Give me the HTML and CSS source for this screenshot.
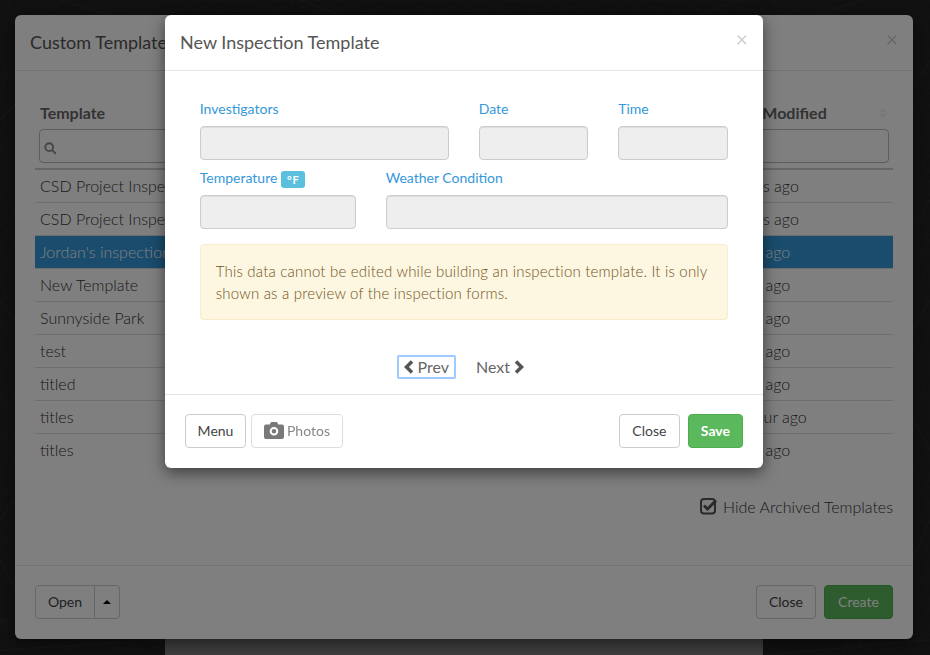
FILE: index.html
```html
<!DOCTYPE html>
<html lang="en">
<head>
  <meta charset="UTF-8">
  <title>New Inspection Template</title>
  <link rel="stylesheet" href="styles.css">
</head>
<body>
  <svg class="map" viewBox="0 0 930 655" aria-hidden="true">
    <filter id="grain">
      <feTurbulence type="fractalNoise" baseFrequency="0.35" numOctaves="2" seed="4"/>
      <feColorMatrix values="0 0 0 0 1  0 0 0 0 1  0 0 0 0 1  0.5 0 0 0 -0.12"/>
    </filter>
    <rect class="map-grain" width="930" height="655" filter="url(#grain)"/>
    <g class="map-roads">
      <path d="M0 120 L15 105 M0 300 L15 320 M0 520 L15 500 M0 560 L15 590"/>
      <path d="M913 90 L930 60 M913 230 L930 200 M913 330 L930 300 M913 560 L930 520 M913 420 L930 450"/>
      <path d="M765 655 L930 640 M0 650 L165 640 M60 0 L110 15 M300 0 L340 15 M700 15 L740 0 M820 15 L860 0"/>
    </g>
    <text class="map-label" x="843" y="645" transform="rotate(12 843 645)">S FRO</text>
    <text class="map-label" x="0" y="625">ht</text>
  </svg>
  <div class="sheet-under"></div>
  <div class="backdrop"></div>

  <div class="modal modal-back">
    <div class="modal-header">
      <h4 class="modal-title">Custom Templates</h4>
      <span class="close">&times;</span>
    </div>
    <div class="modal-body back-body">
      <div class="tpl-row tpl-head">
        <div class="tpl-name">Template</div>
        <div class="tpl-date">Last Modified
          <svg class="sort-icon" viewBox="0 0 10 14"><path d="M5 0l5 6H0zM5 14l5-6H0z"/></svg>
        </div>
      </div>
      <div class="tpl-filter">
        <div class="filter-input">
          <svg class="search-icon" viewBox="0 0 14 14"><circle cx="5.600" cy="5.600" r="4.200"/><path d="M8.800 8.800l4 4"/></svg>
        </div>
        <div class="filter-input"></div>
      </div>
      <div class="tpl-row"><div class="tpl-name">CSD Project Inspection</div><div class="tpl-date">2 days ago</div></div>
      <div class="tpl-row"><div class="tpl-name">CSD Project Inspection</div><div class="tpl-date">2 days ago</div></div>
      <div class="tpl-row is-active"><div class="tpl-name">Jordan's inspection</div><div class="tpl-date">a day ago</div></div>
      <div class="tpl-row"><div class="tpl-name">New Template</div><div class="tpl-date">a day ago</div></div>
      <div class="tpl-row"><div class="tpl-name">Sunnyside Park</div><div class="tpl-date">a day ago</div></div>
      <div class="tpl-row"><div class="tpl-name">test</div><div class="tpl-date">a day ago</div></div>
      <div class="tpl-row"><div class="tpl-name">titled</div><div class="tpl-date">a day ago</div></div>
      <div class="tpl-row"><div class="tpl-name">titles</div><div class="tpl-date">an hour ago</div></div>
      <div class="tpl-row no-line"><div class="tpl-name">titles</div><div class="tpl-date">a day ago</div></div>
      <div class="archived">
        <svg class="check-icon" viewBox="0 0 18 17"><rect x="1" y="1" width="14" height="14.500" rx="3"/><path class="tick" d="M4 7.500L7.500 11 16 2.500"/></svg>
        Hide Archived Templates
      </div>
    </div>
    <div class="modal-footer">
      <div class="btn-group">
        <span class="btn btn-open">Open</span><span class="btn btn-caret"><i class="caret-up"></i></span>
      </div>
      <div class="footer-right">
        <span class="btn">Close</span>
        <span class="btn btn-success btn-create">Create</span>
      </div>
    </div>
  </div>
  <div class="backdrop"></div>

  <div class="modal modal-front">
    <div class="modal-header">
      <h4 class="modal-title">New Inspection Template</h4>
      <span class="close">&times;</span>
    </div>
    <div class="modal-body front-body">
      <div class="form-grid">
        <div class="field span-6"><label>Investigators</label><div class="input"></div></div>
        <div class="field span-3"><label>Date</label><div class="input"></div></div>
        <div class="field span-3"><label>Time</label><div class="input"></div></div>
        <div class="field span-4"><label>Temperature <span class="unit">°F</span></label><div class="input"></div></div>
        <div class="field span-8"><label>Weather Condition</label><div class="input"></div></div>
      </div>
      <div class="alert">This data cannot be edited while building an inspection template. It is only shown as a preview of the inspection forms.</div>
      <div class="pager">
        <span class="pager-btn is-focus"><svg class="chev" viewBox="0 0 10 14"><path d="M8 1.500L2.500 7 8 12.500"/></svg>Prev</span>
        <span class="pager-btn">Next<svg class="chev" viewBox="0 0 10 14"><path d="M2 1.500L7.500 7 2 12.500"/></svg></span>
      </div>
    </div>
    <div class="modal-footer">
      <div class="footer-left">
        <span class="btn btn-fixed">Menu</span>
        <span class="btn btn-disabled"><svg class="camera" viewBox="0 0 20 17"><path fill-rule="evenodd" d="M7 0h6l1.200 2.500H18a2 2 0 0 1 2 2V15a2 2 0 0 1-2 2H2a2 2 0 0 1-2-2V4.500a2 2 0 0 1 2-2h3.800zM10 5a4.300 4.300 0 1 0 0 8.600A4.300 4.300 0 0 0 10 5zm0 2a2.300 2.300 0 1 1 0 4.600A2.300 2.300 0 0 1 10 7z"/></svg>Photos</span>
      </div>
      <div class="footer-right">
        <span class="btn btn-fixed">Close</span>
        <span class="btn btn-success">Save</span>
      </div>
    </div>
  </div>
</body>
</html>
```

FILE: styles.css
```css
* {
  box-sizing: border-box;
}

html,
body {
  height: 100%;
}

body {
  margin: 0;
  overflow: hidden;
  position: relative;
  background-color: #404040;
  font-family: Lato, "Liberation Sans", sans-serif;
  font-size: 16px;
  font-weight: 300;
  color: #333;
}

.map {
  position: absolute;
  top: 0;
  left: 0;
  width: 930px;
  height: 655px;
}

.map-grain {
  opacity: 0.2;
}

.map-roads path {
  fill: none;
  stroke: #555;
  stroke-width: 1.500;
}

.map-label {
  font-size: 10px;
  fill: #6a6a6a;
}

.backdrop {
  position: absolute;
  top: 0;
  left: 0;
  right: 0;
  bottom: 0;
  background-color: rgba(0, 0, 0, 0.5);
}

.sheet-under {
  position: absolute;
  top: 15px;
  left: 165px;
  bottom: 0;
  width: 598px;
  background-color: #fff;
}

.modal {
  position: absolute;
  top: 15px;
  display: flex;
  flex-direction: column;
  background-color: #fff;
  border-radius: 6px;
  box-shadow: 0 5px 15px rgba(0, 0, 0, 0.5);
}

.modal-back {
  left: 15px;
  width: 898px;
  height: 624px;
}

.modal-front {
  left: 165px;
  width: 598px;
  height: 453px;
}

.modal-header {
  display: flex;
  justify-content: space-between;
  height: 56px;
  padding: 15px;
  border-bottom: 1px solid #e5e5e5;
}

.modal-title {
  margin: 0;
  font-size: 18px;
  font-weight: 400;
  line-height: 25px;
  color: #555;
}

.close {
  margin-top: -2px;
  font-size: 21px;
  font-weight: 400;
  line-height: 21px;
  color: #000;
  opacity: 0.2;
}

.modal-body {
  flex: 1;
}

.modal-footer {
  display: flex;
  justify-content: space-between;
  padding: 19px 20px 20px;
  border-top: 1px solid #e5e5e5;
}

.footer-left,
.footer-right {
  display: flex;
}

.footer-left {
  gap: 5px;
}

.footer-right {
  gap: 8px;
}

.btn {
  display: inline-flex;
  align-items: center;
  height: 34px;
  padding: 0 12px 1px;
  border: 1px solid #ccc;
  border-radius: 4px;
  background-color: #fff;
  font-size: 14px;
  font-weight: 400;
  color: #444;
}

.btn-fixed {
  width: 61px;
  justify-content: center;
  padding: 0 0 1px;
}

.btn-success {
  background-color: #5cb85c;
  border-color: #4cae4c;
  color: #fff;
}

.btn-create {
  width: 69px;
  justify-content: center;
  padding: 0 0 1px;
}

.modal-front .btn-success {
  font-weight: 700;
}

.btn-disabled {
  opacity: 0.65;
}

.camera {
  width: 20px;
  height: 17px;
  margin-right: 3px;
  fill: #333;
}

/* back window, template list */
.back-body {
  padding: 24px 20px 0;
}

.tpl-row {
  display: flex;
  height: 33px;
  line-height: 32px;
  border-bottom: 1px solid #ddd;
}

.tpl-row.no-line {
  border-bottom: 0;
}

.tpl-name {
  width: 690px;
  padding-left: 5px;
  white-space: nowrap;
}

.tpl-date {
  flex: 1;
  display: flex;
  white-space: pre;
}

.tpl-head {
  height: 34px;
  line-height: 36px;
  border-bottom: 0;
  font-weight: 700;
  color: #666;
}

.tpl-head .tpl-date {
  padding-left: 4px;
}

.sort-icon {
  width: 8px;
  height: 10px;
  margin: 13px 6px 0 auto;
  fill: #eee;
}

.is-active {
  background-color: #3498db;
  color: #fff;
}

.tpl-filter {
  display: flex;
  justify-content: space-between;
  height: 41px;
  padding: 0 4px;
  border-bottom: 2px solid #ccc;
}

.filter-input {
  width: 156px;
  height: 34px;
  padding: 12px 4px;
  border: 1px solid #bbb;
  border-radius: 4px;
}

.search-icon {
  display: block;
  width: 13px;
  height: 13px;
  fill: none;
  stroke: #888;
  stroke-width: 2;
}

.archived {
  display: flex;
  align-items: center;
  justify-content: flex-end;
  gap: 5px;
  margin-top: 30px;
}

.check-icon {
  width: 18px;
  height: 17px;
  fill: none;
  stroke: #555;
  stroke-width: 2;
}

.check-icon .tick {
  stroke-width: 3;
}

.btn-group {
  display: flex;
}

.btn-open {
  width: 60px;
  justify-content: center;
  padding: 0 0 1px;
  border-radius: 4px 0 0 4px;
}

.btn-caret {
  width: 26px;
  padding: 0;
  justify-content: center;
  margin-left: -1px;
  border-radius: 0 4px 4px 0;
}

.caret-up {
  width: 0;
  height: 0;
  border-left: 4px solid transparent;
  border-right: 4px solid transparent;
  border-bottom: 4px solid #000;
}

/* front window, form */
.front-body {
  padding: 30px 35.25px 0 34.75px;
}

.form-grid {
  display: grid;
  grid-template-columns: repeat(12, 1fr);
  column-gap: 30px;
  row-gap: 10px;
}

.span-3 {
  grid-column: span 3;
}

.span-4 {
  grid-column: span 4;
}

.span-6 {
  grid-column: span 6;
}

.span-8 {
  grid-column: span 8;
}

.field label {
  display: block;
  height: 20px;
  margin-bottom: 5px;
  font-size: 14px;
  font-weight: 400;
  line-height: 16px;
  color: #3498db;
}

.input {
  height: 34px;
  border: 1px solid #ccc;
  border-radius: 4px;
  background-color: #eee;
  box-shadow: inset 0 1px 1px rgba(0, 0, 0, 0.075);
}

.unit {
  display: inline-block;
  height: 17px;
  padding: 0 5px 0 6px;
  border-radius: 3px;
  background-color: #5bc0de;
  font-size: 11px;
  font-weight: 700;
  line-height: 17px;
  letter-spacing: 1px;
  color: #fff;
  vertical-align: -1px;
}

.alert {
  margin-top: 15px;
  padding: 15px;
  border: 1px solid #faebcc;
  border-radius: 4px;
  background-color: #fdf6e0;
  font-size: 15px;
  line-height: 22px;
  letter-spacing: 0.2px;
  color: #6f5426;
}

.pager {
  display: flex;
  justify-content: center;
  gap: 13px;
  margin-top: 35px;
}

.pager-btn {
  display: inline-flex;
  align-items: center;
  gap: 4px;
  height: 24px;
  padding: 0 5px 1px;
  border: 2px solid transparent;
  font-size: 16px;
  font-weight: 400;
  color: #666;
}

.pager-btn.is-focus {
  border-color: #9ecaff;
  border-radius: 2px;
}

.chev {
  width: 10px;
  height: 14px;
  fill: none;
  stroke: #555;
  stroke-width: 3.500;
}
```
